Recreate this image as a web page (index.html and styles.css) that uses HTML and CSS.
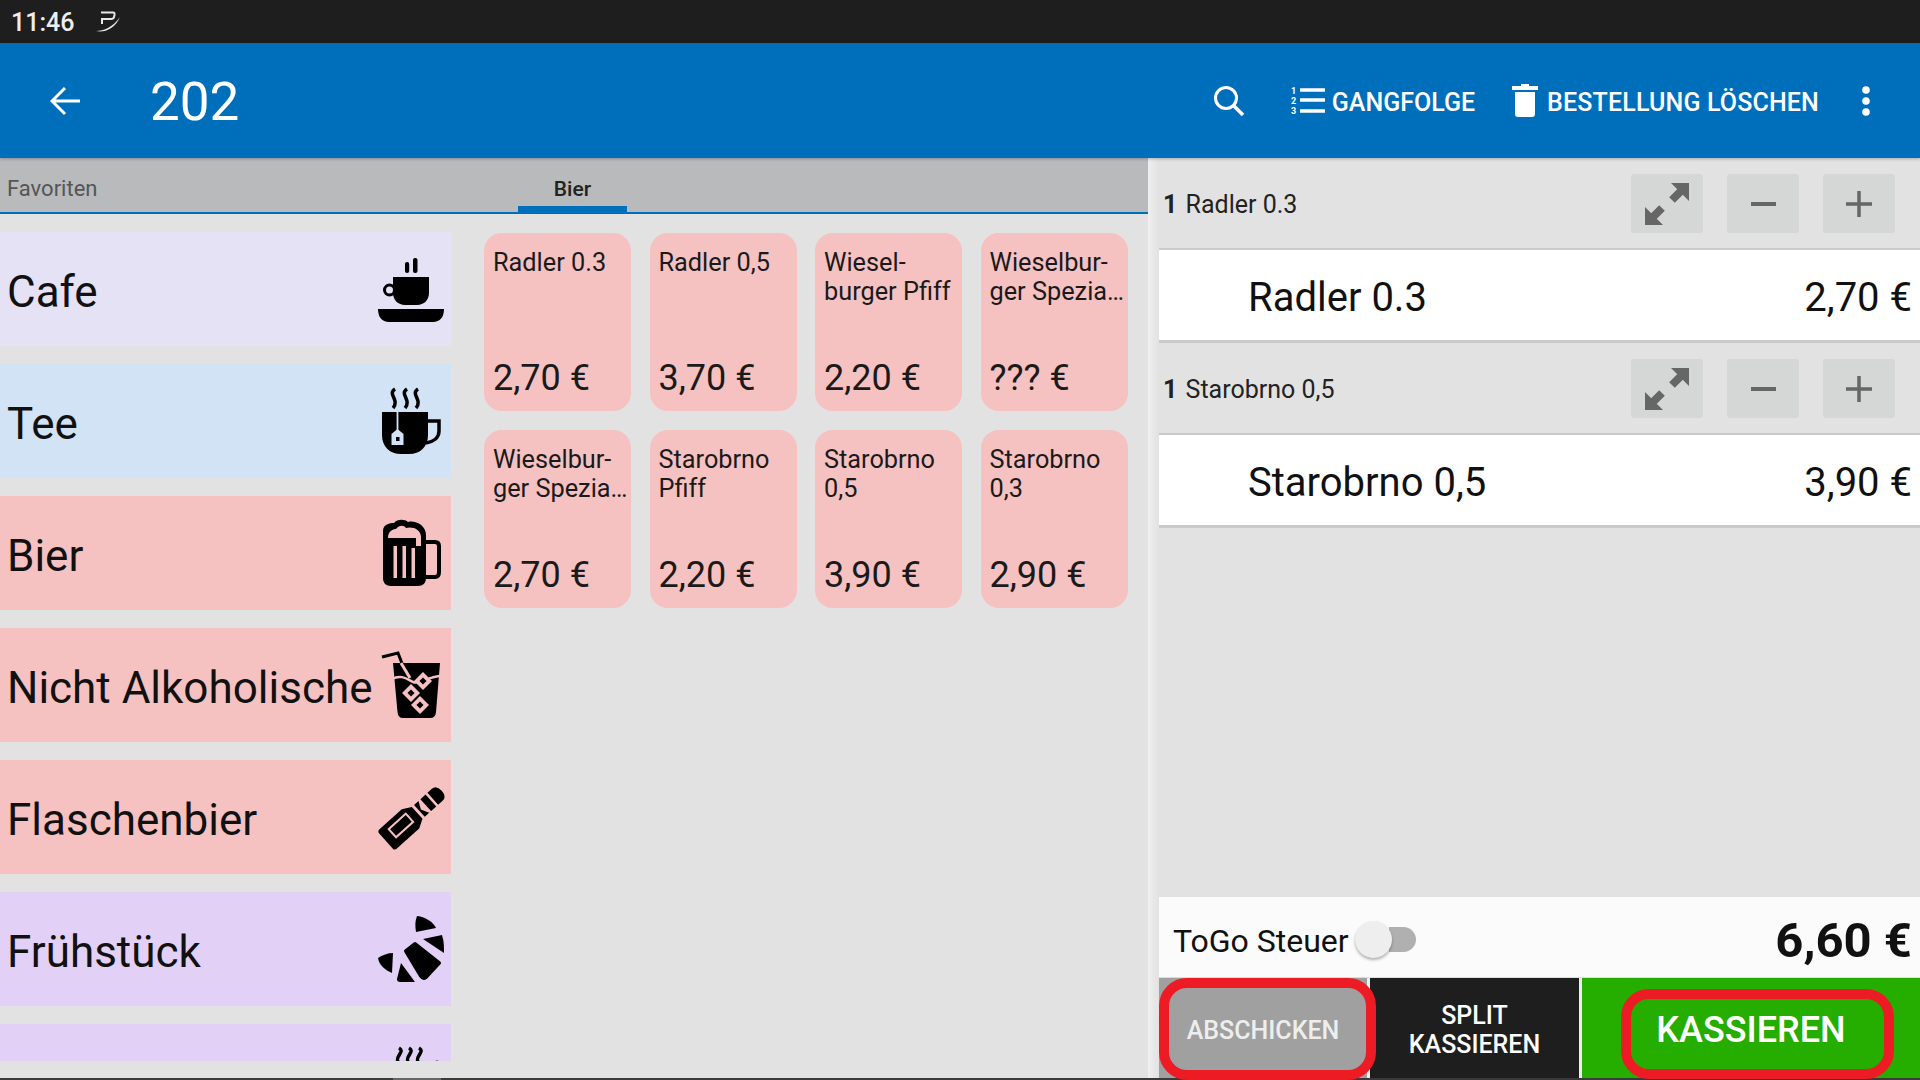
FILE: index.html
```html
<!DOCTYPE html>
<html lang="de" dir="ltr">
  <head>
    <meta charset="UTF-8">
    <meta name="viewport" content="width=device-width, initial-scale=1.0">
    <title>202</title>
    <link rel="stylesheet" href="styles.css">
  </head>
  <body>
    <div class="screen">
      <div class="statusbar">
        <span class="clock">11:46</span>
        <svg class="status-icon" viewBox="0 0 26 24"><path d="M6 2.500H18Q20 2.500 19.500 5L19 7Q18.500 9 16 9H7V14" fill="none" stroke="#e8e8e8" stroke-width="2"/><path d="M1 21C9 21 18 17 25 7C20 19 9 23 1 21Z" fill="#e8e8e8"/></svg>
      </div>

      <header class="appbar">
        <svg class="back" viewBox="0 0 32 30"><path d="M30 15H3M15 2L2 15L15 28" fill="none" stroke="#fff" stroke-width="3"/></svg>
        <h1 class="title">202</h1>
        <svg class="search" viewBox="0 0 32 32"><circle cx="13" cy="13" r="10.500" fill="none" stroke="#fff" stroke-width="3"/><path d="M20.500 20.500L30 30" stroke="#fff" stroke-width="3.500"/></svg>
        <svg class="courses" viewBox="0 0 35 30"><text x="0" y="8" class="course-num">1</text><text x="0" y="18" class="course-num">2</text><text x="0" y="28" class="course-num">3</text><path d="M9 4H34M9 14H34M9 25H34" stroke="#fff" stroke-width="3.500"/></svg>
        <span class="action-label">GANGFOLGE</span>
        <svg class="trash" viewBox="0 0 26 33"><path d="M9 0H17V2H26V6H0V2H9ZM3 8H23V30Q23 33 20 33H6Q3 33 3 30Z" fill="#fff"/></svg>
        <span class="action-label action-wide">BESTELLUNG LÖSCHEN</span>
        <svg class="more" viewBox="0 0 8 30"><circle cx="4" cy="4" r="3.800" fill="#fff"/><circle cx="4" cy="15" r="3.800" fill="#fff"/><circle cx="4" cy="26" r="3.800" fill="#fff"/></svg>
      </header>

      <main class="main">
        <section class="catalog">
          <div class="tabs">
            <span class="tab">Favoriten</span>
            <span class="tab tab-active">Bier</span>
          </div>
          <div class="catalog-body">
            <div class="categories">
              <div class="category cat-cafe">
                <span class="cat-name">Cafe</span>
                <svg class="cat-icon" viewBox="0 0 72 72">
                  <path d="M5 56H71C71 64 67 69 60 69H16C9 69 5 64 5 56Z"/>
                  <path d="M20 24H56V40C56 47 51 52 44 52H32C25 52 20 47 20 40Z"/>
                  <circle cx="16.500" cy="37" r="5" fill="none" stroke="#000" stroke-width="3"/>
                  <rect x="32" y="9" width="4.200" height="11" rx="2"/>
                  <rect x="40" y="5" width="4.500" height="15" rx="2"/>
                </svg>
              </div>
              <div class="category cat-tea">
                <span class="cat-name">Tee</span>
                <svg class="cat-icon" viewBox="0 0 72 72">
                  <path d="M9 27H55V50C55 62 47 69 36 69H28C17 69 9 62 9 50Z"/>
                  <path d="M55 36H66V46C66 53 60 57 53 58" fill="none" stroke="#000" stroke-width="3.500"/>
                  <path d="M24.500 27V45" stroke="#d2e3f6" stroke-width="1.800"/>
                  <path d="M24.500 44L30.500 49V60H18.500V49Z" fill="#d2e3f6"/>
                  <rect x="23" y="52" width="3.500" height="4"/>
                  <path d="M22 4C14 9 27 15 20 23M34 4C26 9 39 15 32 23M45 4C37 9 50 15 43 23" fill="none" stroke="#000" stroke-width="3.500"/>
                </svg>
              </div>
              <div class="category cat-drink">
                <span class="cat-name">Bier</span>
                <svg class="cat-icon" viewBox="0 0 72 72">
                  <path d="M10 14C10 7 17 6 21 6C24 2 32 2 35 5C42 3 53 8 53 18V61C53 66 50 69 45 69H18C13 69 10 66 10 61Z"/>
                  <path d="M15 21C15 14 20 12 23 12C26 8 31 8 33 11C39 9 48 12 48 20V29H43V21Z" fill="#f6c1c1"/>
                  <path d="M20.500 29H24V61H20.500ZM29.500 29H33V61H29.500ZM38.500 31H42V61H38.500Z" fill="#f6c1c1"/>
                  <path d="M53 25H62Q66 25 66 29V55Q66 60 62 60H53" fill="none" stroke="#000" stroke-width="4"/>
                </svg>
              </div>
              <div class="category cat-drink">
                <span class="cat-name">Nicht Alkoholische</span>
                <svg class="cat-icon" viewBox="0 0 72 72">
                  <path d="M20 14H67L63 63Q62.500 69 57 69H30Q25 69 24.500 63Z"/>
                  <path d="M9 8L25 4L30 17" fill="none" stroke="#000" stroke-width="3"/>
                  <path d="M28 14L37 29" stroke="#f6c1c1" stroke-width="3"/>
                  <path d="M19 30C28 25 34 30 40 33C47 36 56 27 68 27" fill="none" stroke="#f6c1c1" stroke-width="2.500"/>
                  <path d="M50 23L59 32L50 41L41 32Z" fill="#f6c1c1"/><rect x="47.500" y="29.500" width="5" height="5" transform="rotate(45 50 32)"/>
                  <path d="M38 35L47 44L38 53L29 44Z" fill="#f6c1c1"/><rect x="35.500" y="41.500" width="5" height="5" transform="rotate(45 38 44)"/>
                  <path d="M47 47L56 56L47 65L38 56Z" fill="#f6c1c1"/><rect x="44.500" y="53.500" width="5" height="5" transform="rotate(45 47 56)"/>
                </svg>
              </div>
              <div class="category cat-drink">
                <span class="cat-name">Flaschenbier</span>
                <svg class="cat-icon" viewBox="0 0 72 72">
                  <g transform="translate(13.700 59.300) rotate(-42)">
                    <path d="M-1 -10Q-1 -13 2 -13H32L41 -8V8L32 13H2Q-1 13 -1 10Z"/>
                    <rect x="9" y="-7" width="23" height="11" fill="#000" stroke="#f6c1c1" stroke-width="2"/>
                    <path d="M44 -8H50L46 0L50 8H44Z"/>
                    <rect x="52.500" y="-8" width="7" height="16"/>
                    <path d="M62 -8H68Q74 -8 74 0Q74 8 68 8H62Z"/>
                  </g>
                </svg>
              </div>
              <div class="category cat-food">
                <span class="cat-name">Frühstück</span>
                <svg class="cat-icon" viewBox="0 0 72 72">
                  <path d="M44 3C53 4 60 9 63 15L43 19C42 13 42 8 44 3Z"/>
                  <path d="M50 26L69 22C71 28 71 34 71 40Z"/>
                  <path d="M33 38L42 31L66 50L53 64Q50 66 48 63Z" stroke="#000" stroke-width="4" stroke-linejoin="round"/>
                  <path d="M28 50L42 69H27Q24 69 24 66Z"/>
                  <path d="M5 45C9 42 15 40 20 40L19 60C12 57 6 52 5 45Z"/>
                </svg>
              </div>
              <div class="category cat-food">
                <svg class="cat-icon" viewBox="0 0 72 72">
                  <path d="M26 3C33 7 20 12 26 18M36 3C43 7 30 12 36 18M46 3C53 7 40 12 46 18" fill="none" stroke="#000" stroke-width="3.500"/>
                  <path d="M60 18Q64 13 68 18Z"/>
                </svg>
              </div>
            </div>

            <div class="products">
              <div class="product"><span>Radler 0.3</span><span class="product-price">2,70 €</span></div>
              <div class="product"><span>Radler 0,5</span><span class="product-price">3,70 €</span></div>
              <div class="product"><span>Wiesel-<br>burger Pfiff</span><span class="product-price">2,20 €</span></div>
              <div class="product"><span>Wieselbur-<br>ger Spezia…</span><span class="product-price">??? €</span></div>
              <div class="product"><span>Wieselbur-<br>ger Spezia…</span><span class="product-price">2,70 €</span></div>
              <div class="product"><span>Starobrno<br>Pfiff</span><span class="product-price">2,20 €</span></div>
              <div class="product"><span>Starobrno<br>0,5</span><span class="product-price">3,90 €</span></div>
              <div class="product"><span>Starobrno<br>0,3</span><span class="product-price">2,90 €</span></div>
            </div>
          </div>
        </section>

        <div class="divider"></div>

        <section class="order">
          <div class="order-head">
            <span class="order-name"><b>1</b> Radler 0.3</span>
            <button class="qty-btn"><svg viewBox="0 0 72 59"><path d="M40 9H58V27ZM14 51V33L32 51Z" fill="#666"/><path d="M51 16L41 26M31 34L21 44" stroke="#666" stroke-width="8"/></svg></button>
            <button class="qty-btn"><svg viewBox="0 0 72 59"><path d="M24 30H49" stroke="#666" stroke-width="4"/></svg></button>
            <button class="qty-btn"><svg viewBox="0 0 72 59"><path d="M23 30H49M36 17V43" stroke="#666" stroke-width="3.500"/></svg></button>
          </div>
          <div class="order-line"><span>Radler 0.3</span><span>2,70 €</span></div>
          <div class="order-head">
            <span class="order-name"><b>1</b> Starobrno 0,5</span>
            <button class="qty-btn"><svg viewBox="0 0 72 59"><path d="M40 9H58V27ZM14 51V33L32 51Z" fill="#666"/><path d="M51 16L41 26M31 34L21 44" stroke="#666" stroke-width="8"/></svg></button>
            <button class="qty-btn"><svg viewBox="0 0 72 59"><path d="M24 30H49" stroke="#666" stroke-width="4"/></svg></button>
            <button class="qty-btn"><svg viewBox="0 0 72 59"><path d="M23 30H49M36 17V43" stroke="#666" stroke-width="3.500"/></svg></button>
          </div>
          <div class="order-line"><span>Starobrno 0,5</span><span>3,90 €</span></div>

          <div class="order-space"></div>

          <div class="total">
            <span class="togo">ToGo Steuer</span>
            <span class="switch"><span class="switch-thumb"></span></span>
            <span class="total-sum">6,60 €</span>
          </div>
          <div class="actions">
            <button class="act act-send">ABSCHICKEN</button>
            <button class="act act-split">SPLIT<br>KASSIEREN</button>
            <button class="act act-pay">KASSIEREN</button>
            <div class="mark mark-send"></div>
            <div class="mark mark-pay"></div>
          </div>
        </section>
      </main>

      <div class="navstrip"><span class="navstrip-thumb"></span></div>
    </div>
  </body>
</html>
```

FILE: styles.css
```css
* { box-sizing: border-box; }
html, body { margin: 0; padding: 0; }
body {
  font-family: Roboto, "Liberation Sans", sans-serif;
  background-color: #e2e2e2;
  color: #111;
}
.screen {
  width: 1920px;
  height: 1080px;
  display: flex;
  flex-direction: column;
  overflow: hidden;
}

/* status bar */
.statusbar {
  height: 43px;
  background-color: #1e1e1e;
  display: flex;
  align-items: center;
  padding-left: 11px;
  gap: 21px;
}
.clock {
  color: #eee;
  font-size: 25px;
  font-weight: 500;
  padding-top: 2px;
}
.status-icon { width: 26px; height: 24px; }

/* app bar */
.appbar {
  position: relative;
  z-index: 1;
  height: 115px;
  background-color: #006fbb;
  color: #fff;
  display: flex;
  align-items: center;
  padding-left: 50px;
  box-shadow: 0 1px 3px rgba(0, 0, 0, 0.25);
}
.back { width: 32px; height: 30px; margin-right: 68px; }
.title {
  margin: 0;
  padding-top: 3px;
  font-size: 53px;
  font-weight: 400;
}
.search { width: 32px; height: 32px; margin: 0 46px 0 auto; }
.courses { width: 35px; height: 30px; margin-right: 6px; }
.course-num { font-size: 9px; font-weight: 700; fill: #fff; }
.action-label { font-size: 25px; font-weight: 500; padding-top: 3px; }
.action-wide { letter-spacing: 0.15px; }
.trash { width: 26px; height: 33px; margin: 0 9px 0 37px; }
.more { width: 8px; height: 30px; margin: 0 50px 0 43px; }

/* main area */
.main { flex: 1; display: flex; min-height: 0; }
.catalog { width: 1148px; display: flex; flex-direction: column; }
.tabs {
  height: 56px;
  background-color: #b9babc;
  border-bottom: 2px solid #006fbb;
  display: flex;
}
.tab {
  font-size: 22px;
  color: #555;
  line-height: 62px;
  padding-left: 7px;
  width: 518px;
}
.tab-active {
  width: 109px;
  padding: 0;
  font-size: 21px;
  text-align: center;
  color: #222;
  font-weight: 500;
  border-bottom: 6px solid #006fbb;
}
.catalog-body { flex: 1; display: flex; min-height: 0; }

.categories {
  width: 451px;
  height: 847px;
  padding-top: 18px;
  overflow: hidden;
  display: flex;
  flex-direction: column;
  gap: 18px;
}
.category {
  flex: none;
  height: 114px;
  padding: 0 6px 0 7px;
  display: flex;
  align-items: center;
  justify-content: space-between;
  font-size: 44px;
  color: #111;
}
.cat-name { margin-top: 5px; }
.category:last-child { justify-content: flex-end; }
.cat-cafe { background-color: #e5e2f6; }
.cat-tea { background-color: #d2e3f6; }
.cat-drink { background-color: #f6c1c1; }
.cat-food { background-color: #e2d0f6; }
.cat-icon { width: 72px; height: 72px; flex: none; }

.products {
  padding: 19px 0 0 33px;
  display: grid;
  grid-template-columns: repeat(4, 147px);
  grid-auto-rows: 178px;
  gap: 18.500px;
}
.product {
  background-color: #f6c1c1;
  border-radius: 18px;
  padding: 15px 0 13px 9px;
  display: flex;
  flex-direction: column;
  justify-content: space-between;
  font-size: 25.300px;
  line-height: 29px;
  color: #1a1a1a;
  white-space: nowrap;
}
.product-price { font-size: 36px; line-height: 40px; }

.divider {
  width: 11px;
  background: linear-gradient(to right, #f0f0f0 0, #e9e9e9 40%, #e2e2e2 100%);
}

/* order column */
.order { flex: 1; display: flex; flex-direction: column; min-width: 0; }
.order-head {
  height: 92px;
  flex: none;
  padding-right: 25px;
  border-bottom: 2px solid #cacaca;
  display: flex;
  align-items: center;
  gap: 24px;
}
.order-name { flex: 1; font-size: 25px; padding: 2px 0 0 4px; color: #222; }
.order-name b { font-weight: 700; margin-right: 2px; }
.qty-btn {
  width: 72px;
  height: 59px;
  padding: 0;
  border: 0;
  border-radius: 3px;
  background-color: #d5d7d6;
  display: flex;
}
.qty-btn svg { width: 72px; height: 59px; }
.order-line {
  height: 93px;
  flex: none;
  background-color: #fff;
  border-bottom: 3px solid #cacaca;
  padding: 4px 8px 0 89px;
  display: flex;
  align-items: center;
  justify-content: space-between;
  font-size: 40px;
  color: #111;
}
.order-space { flex: 1; }

.total {
  height: 81px;
  flex: none;
  background-color: #fbfbfb;
  border-bottom: 1px solid #ddd;
  padding: 4px 8px 0 14px;
  display: flex;
  align-items: center;
}
.togo { font-size: 32px; color: #111; margin-top: 3px; }
.switch {
  position: relative;
  width: 27px;
  height: 25px;
  margin-left: 40px;
  background-color: #b0b0b0;
  border-radius: 0 13px 13px 0;
}
.switch-thumb {
  position: absolute;
  left: -34px;
  top: -6px;
  width: 37px;
  height: 37px;
  border-radius: 50%;
  background-color: #eee;
  box-shadow: 0 2px 3px rgba(0, 0, 0, 0.3);
}
.total-sum { margin: 3px 0 0 auto; font-size: 49px; font-weight: 700; color: #111; }

.actions {
  position: relative;
  height: 100px;
  flex: none;
  display: flex;
  gap: 3px;
  background-color: #ededed;
}
.act {
  border: 0;
  padding: 4px 0 0;
  font-family: inherit;
  font-weight: 500;
  color: #fff;
}
.act-send { width: 208px; background-color: #a0a0a0; color: #eee; font-size: 25px; }
.act-split { width: 209px; background-color: #1e1e1e; font-size: 25px; line-height: 29px; }
.act-pay { flex: 1; background-color: #25ad00; font-size: 36px; }

/* red marks drawn over the buttons */
.mark {
  position: absolute;
  border: 10px solid #ed1c24;
  border-radius: 28px;
  z-index: 2;
}
.mark-send { left: 0; top: 0; width: 217px; height: 102px; }
.mark-pay { left: 462px; top: 11px; width: 273px; height: 90px; }

.navstrip {
  height: 2px;
  flex: none;
  background-color: #3a3a3a;
  padding-left: 393px;
}
.navstrip-thumb { display: block; width: 48px; height: 2px; background-color: #666; }
```
